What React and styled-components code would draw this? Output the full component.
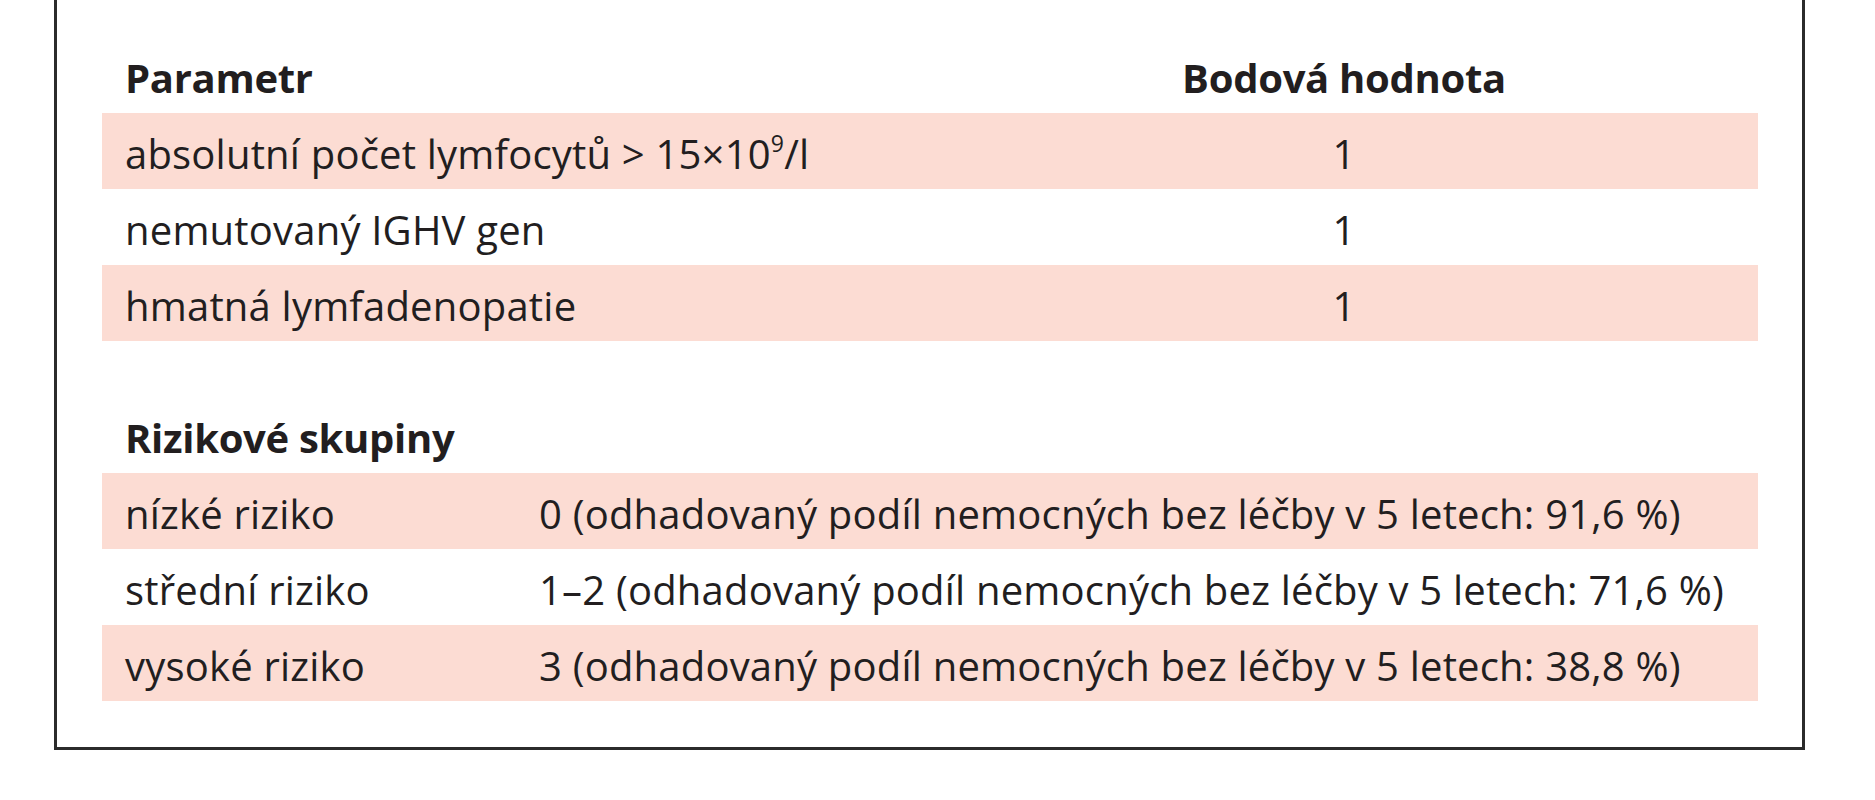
import styled, { createGlobalStyle } from "styled-components";

const GlobalStyle = createGlobalStyle`
  html, body {
    margin: 0;
    padding: 0;
    background: #ffffff;
  }
  body {
    font-family: "Open Sans", "Noto Sans", sans-serif;
    color: #221e1f;
  }
`;

const scoreRows = [
  { label: <>absolutní počet lymfocytů &gt; 15×10<Sup>9</Sup>/l</>, value: "1" },
  { label: "nemutovaný IGHV gen", value: "1" },
  { label: "hmatná lymfadenopatie", value: "1" },
];

const riskRows = [
  { label: "nízké riziko", value: "0 (odhadovaný podíl nemocných bez léčby v 5 letech: 91,6 %)" },
  { label: "střední riziko", value: "1–2 (odhadovaný podíl nemocných bez léčby v 5 letech: 71,6 %)" },
  { label: "vysoké riziko", value: "3 (odhadovaný podíl nemocných bez léčby v 5 letech: 38,8 %)" },
];

export default function App() {
  return (
    <>
      <GlobalStyle />
      <Frame>
        <Table>
          <Row cols="1055px 328px">
            <HeadCell>Parametr</HeadCell>
            <HeadCell center>Bodová hodnota</HeadCell>
          </Row>
          {scoreRows.map((r, i) => (
            <Row key={i} cols="1055px 328px" shaded={i % 2 === 0}>
              <Cell>{r.label}</Cell>
              <Cell center>{r.value}</Cell>
            </Row>
          ))}
        </Table>

        <Table spaced>
          <Row cols="414px 1fr">
            <HeadCell>Rizikové skupiny</HeadCell>
          </Row>
          {riskRows.map((r, i) => (
            <Row key={i} cols="414px 1fr" shaded={i % 2 === 0}>
              <Cell>{r.label}</Cell>
              <Cell>{r.value}</Cell>
            </Row>
          ))}
        </Table>
      </Frame>
    </>
  );
}

const Frame = styled.div`
  box-sizing: border-box;
  margin-left: 54px;
  width: 1751px;
  height: 750px;
  border: 3px solid #2b2b2b;
  border-top: none;
  padding: 37px 44px 0 45px;
`;

const Table = styled.div`
  display: flex;
  flex-direction: column;
  margin-top: ${(p) => (p.spaced ? "56px" : "0")};
`;

const Row = styled.div`
  display: grid;
  grid-template-columns: ${(p) => p.cols};
  height: 76px;
  align-items: start;
  padding-left: 23px;
  background: ${(p) => (p.shaded ? "#fcdcd3" : "transparent")};
`;

const Cell = styled.div`
  font-size: 40px;
  font-weight: 400;
  padding-top: 5px;
  line-height: 71px;
  letter-spacing: 0.2px;
  white-space: nowrap;
  text-align: ${(p) => (p.center ? "center" : "left")};
`;

const HeadCell = styled(Cell)`
  font-weight: 700;
  letter-spacing: -0.3px;
`;

function Sup({ children }) {
  return <SupText>{children}</SupText>;
}

const SupText = styled.sup`
  font-size: 23px;
  line-height: 0;
  vertical-align: 17px;
`;
